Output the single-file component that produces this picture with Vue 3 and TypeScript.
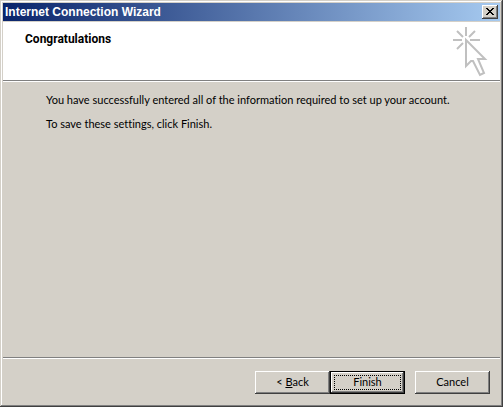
<script setup lang="ts">
const title = 'Internet Connection Wizard'
const heading = 'Congratulations'
const messages: string[] = [
  'You have successfully entered all of the information required to set up your account.',
  'To save these settings, click Finish.',
]
</script>

<template>
  <main class="window">
    <header class="titlebar">
      <h1 class="title">{{ title }}</h1>
      <button class="close" type="button" aria-label="Close">
        <svg width="8" height="7" viewBox="0 0 8 7" shape-rendering="crispEdges" aria-hidden="true">
          <path d="M0 0h2v1h1v1h2v-1h1v-1h2v1h-1v1h-1v1h-1v1h1v1h1v1h1v1h-2v-1h-1v-1h-2v1h-1v1h-2v-1h1v-1h1v-1h1v-1h-1v-1h-1v-1h-1z" />
        </svg>
      </button>
    </header>

    <section class="banner">
      <h2 class="heading">{{ heading }}</h2>
      <svg class="pointer" width="36" height="52" viewBox="0 0 36 52" aria-hidden="true">
        <path d="M14 1v9M1 14h9M18 14h10M5 5l6 6M23 5l-6 6M5 23l6-6" />
        <path d="M14 14v26l5-5h2l7 14 4-2-6-14h7z" />
      </svg>
    </section>

    <section class="content">
      <p v-for="message in messages" :key="message" class="message">{{ message }}</p>
    </section>

    <footer class="actions">
      <div class="steps">
        <button class="button" type="button"><span>&lt; <u>B</u>ack</span></button>
        <button class="button primary" type="button"><span class="focus">Finish</span></button>
      </div>
      <button class="button" type="button"><span>Cancel</span></button>
    </footer>
  </main>
</template>

<style>
body {
  margin: 0;
  background: #d4d0c8;
}
</style>

<style scoped>
.window {
  box-sizing: border-box;
  display: flex;
  flex-direction: column;
  min-height: 100vh;
  padding: 3px;
  background: #d4d0c8;
  box-shadow: inset -1px -1px #404040, inset 1px 1px #d4d0c8, inset -2px -2px #808080, inset 2px 2px #fff;
  color: #000;
  font: 11px/16px Lato, "Liberation Sans", Arial, sans-serif;
  font-variant-ligatures: none;
}

.titlebar {
  display: flex;
  align-items: center;
  justify-content: space-between;
  height: 18px;
  padding: 0 2px;
  border-bottom: 1px solid #d4d0c8;
  background: linear-gradient(90deg, #0a246a, #a6caf0) padding-box;
}

.title {
  margin: 0;
  color: #fff;
  font-family: "Liberation Sans", Arial, sans-serif;
  font-size: 12px;
  line-height: 18px;
}

.close {
  display: flex;
  align-items: center;
  justify-content: center;
  width: 16px;
  height: 14px;
  padding: 0 1px 1px 0;
  border: 0;
  background: #d4d0c8;
  box-shadow: inset -1px -1px #404040, inset 1px 1px #fff, inset -2px -2px #808080;
}

.banner {
  display: flex;
  align-items: flex-start;
  justify-content: space-between;
  height: 58px;
  padding: 0 12px 0 22px;
  border-bottom: 1px solid #808080;
  background: #fff;
  box-shadow: 0 1px #fff;
}

.heading {
  margin: 9px 0 0;
  font-family: Roboto, "Liberation Sans", sans-serif;
  font-size: 12px;
  line-height: 16px;
}

.pointer {
  margin-top: 4px;
  fill: none;
  stroke: #c0c0c0;
  stroke-width: 2;
}

.content {
  flex: 1;
  padding: 11px 43px;
}

.message {
  margin: 0 0 8px;
}

.actions {
  display: flex;
  justify-content: flex-end;
  gap: 10px;
  padding: 13px 10px 10px;
  border-top: 1px solid #808080;
  box-shadow: inset 0 1px #fff;
}

.steps {
  display: flex;
}

.button {
  display: flex;
  align-items: center;
  justify-content: center;
  width: 75px;
  height: 23px;
  padding: 0 0 2px;
  border: 0;
  background: #d4d0c8;
  box-shadow: inset -1px -1px #404040, inset 1px 1px #fff, inset -2px -2px #808080;
  color: #000;
  font: 11px/15px Lato, "Liberation Sans", Arial, sans-serif;
  font-variant-ligatures: none;
}

.primary {
  padding: 0;
  border: 1px solid #000;
}

.focus {
  box-sizing: border-box;
  width: 67px;
  height: 15px;
  border: 1px dotted #000;
  line-height: 11px;
}
</style>
